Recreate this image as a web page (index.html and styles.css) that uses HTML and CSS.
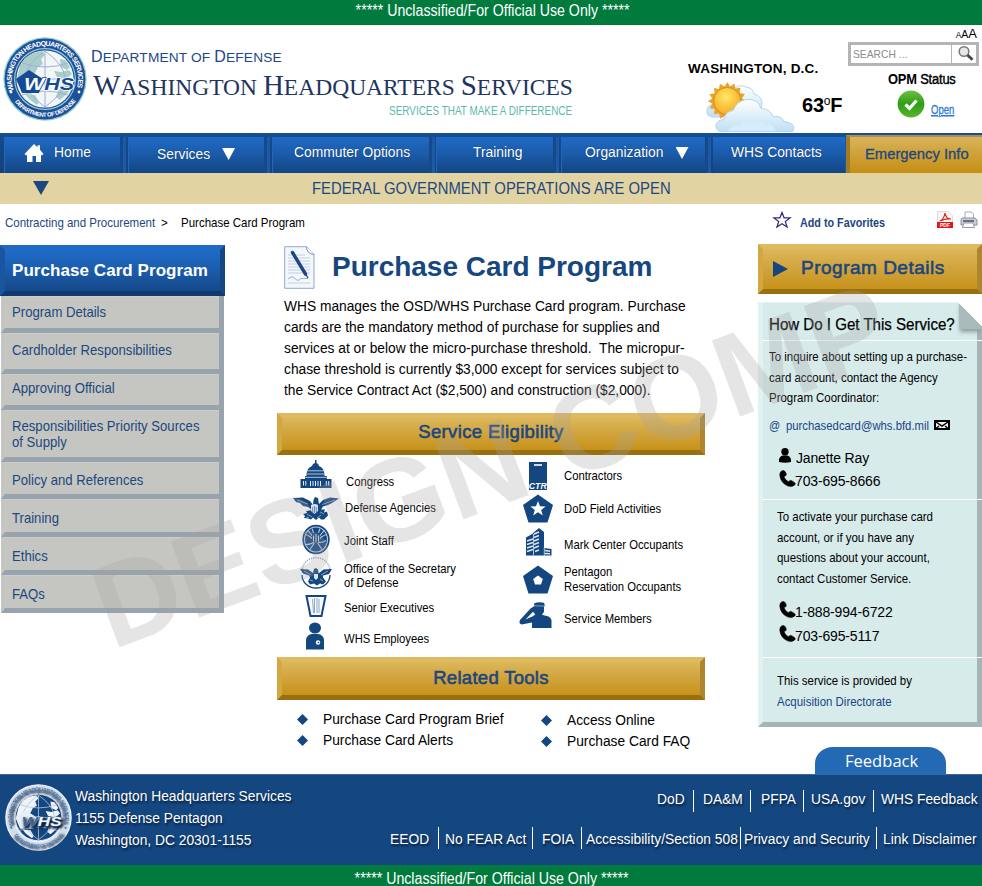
FILE: index.html
```html
<!DOCTYPE html>
<html lang="en">
<head>
<meta charset="utf-8">
<title>Purchase Card Program</title>
<link rel="stylesheet" href="styles.css">
</head>
<body>
<svg class="defs" width="0" height="0" aria-hidden="true">
  <defs>
    <path id="arcTop" d="M10.9 53.3A33.1 33.1 0 1 1 73.1 53.3"/>
    <path id="arcBottom" d="M9.5 61.4A37.9 37.9 0 0 0 74.5 61.4"/>
    <symbol id="seal" viewBox="0 0 84 84">
      <circle class="s-edge" cx="42" cy="42" r="41.7"/>
      <circle class="s-ring" cx="42" cy="42" r="40.4"/>
      <circle class="s-line" cx="42" cy="42" r="31"/>
      <circle class="s-ring" cx="42" cy="42" r="29.8"/>
      <circle class="s-globe" cx="42" cy="42" r="28.6"/>
      <path class="s-land" d="M17 29l5-8 8-5 9-2 3 4-4 4 2 5-5 3-3 6-8 3-6 4-4-2zM57 22l5 1 5 7-3 3-6-3zM60 50l8-3-3 9-8 7-4-3 2-6zM22 57l10 1 4 7-2 3-8-6zM51 34l7 1 8-2 3 4-6 5-9-2z"/>
      <path class="s-grid" d="M42 14v56M14 42h56M19 26q23 8 46 0M19 58q23-8 46 0M42 14q-40 28 0 56M42 14q40 28 0 56"/>
      <path class="s-penta" d="M26 33l14 9-4 14H19l-6-14z"/>
      <text class="s-whs" x="21" y="53" textLength="50" lengthAdjust="spacingAndGlyphs"><tspan class="s-w">W</tspan><tspan class="s-hs">HS</tspan></text>
      <text class="s-text"><textPath href="#arcTop" textLength="124">WASHINGTON HEADQUARTERS SERVICES</textPath></text>
      <text class="s-text s-small"><textPath href="#arcBottom" startOffset="4" textLength="71">DEPARTMENT OF DEFENSE</textPath></text>
      <circle class="s-dot" cx="8" cy="55" r="1.4"/><circle class="s-dot" cx="76" cy="55" r="1.4"/>
    </symbol>
    <symbol id="phone" viewBox="0 0 17 17">
      <path d="M2.2 1.2Q4.6-.6 6.3 1.8l1 2.4q.2 1.3-1 1.7l-1.4.6q.8 3.3 4.4 5.2l1.4-1q1-.6 2 0l3 2q1.200 1 0 2.200-2.600 2.400-6.600 1.200Q2 13.300.900 6q-.400-3.400 1.300-4.800z" stroke="#000" stroke-width=".6"/>
    </symbol>
    <linearGradient id="cloud" x1="0" y1="0" x2="0" y2="1"><stop offset="0" stop-color="#fff"/><stop offset="1" stop-color="#bfe0f4"/></linearGradient>
    <radialGradient id="sun" cx=".45" cy=".35" r=".7"><stop offset="0" stop-color="#ffe66a"/><stop offset="1" stop-color="#f5a91a"/></radialGradient>
    <linearGradient id="ok" x1="0" y1="0" x2="0" y2="1"><stop offset="0" stop-color="#6cc040"/><stop offset=".5" stop-color="#2f9d17"/><stop offset="1" stop-color="#58b52c"/></linearGradient>
  </defs>
</svg>

<div class="page">
  <div class="banner"><span>***** Unclassified/For Official Use Only *****</span></div>

  <header class="header">
    <svg class="logo"><use href="#seal"/></svg>
    <div class="brand">
      <div class="dept"><b>D</b>EPARTMENT OF <b>D</b>EFENSE</div>
      <div class="whs"><b>W</b>ASHINGTON <b>H</b>EADQUARTERS <b>S</b>ERVICES</div>
      <div class="tag">SERVICES THAT MAKE A DIFFERENCE</div>
    </div>
    <div class="weather">
      <div class="city">WASHINGTON, D.C.</div>
      <div class="now">
        <svg width="94" height="52" viewBox="0 0 94 52">
          <path d="M8 37q-6-1-5-7 1-6 8-6l20-16q6-4 11-1 7 1 8 7 8 2 8 10-1 10-9 13z" fill="url(#cloud)" stroke="#b5d5ea" stroke-width="1"/>
          <path d="M23.500 2l2.500 4.600 4.500-3 .8 5 5.200-.9-.8 5.200 5.200 1-2.900 4.400L42.300 21.200l-4.300 2.900 2.900 4.400-5.200 1 .8 5.200-5.200-.9-1 5.100-4.400-3.100-2.700 4.200-2.700-4.200-4.400 2.900-1-5.200-5.200.8.900-5.200-5.200-.9 3-4.400L4 21.200l4.200-2.600L5.500 14.200l5.200-1-.9-5.200 5.200.9.900-5.200 4.600 2.900z" fill="#eba32a"/>
          <circle cx="23.300" cy="21" r="13.600" fill="url(#sun)" stroke="#d98f18"/>
          <path d="M15 51.500q-4-3-3-7 2-5 8-5 1-8 9-9 4-10 14-11 11-1 14 9 9 0 12 8 9-1 11 5 9 1 10 6l-1 4z" fill="url(#cloud)" stroke="#b5d5ea"/>
          <path d="M24 51q3-8 12-5 4-7 13-3 7-5 13 2 7-2 10 6z" fill="#d5ecfa"/>
        </svg>
        <div class="temp">63<span>o</span>F</div>
      </div>
    </div>
    <div class="tools">
      <div class="sizes"><span class="sm">A</span><span class="md">A</span><span class="lg">A</span></div>
      <div class="search">
        <span class="ph">SEARCH ...</span>
        <span class="go"><svg width="18" height="18" viewBox="0 0 18 18"><circle cx="7" cy="6.500" r="4.800" fill="#e4e8ea" stroke="#777" stroke-width="1.500"/><path d="M10.500 10l5 4.800" stroke="#444" stroke-width="2.800"/></svg></span>
      </div>
      <div class="opm"><b>OPM</b> <span>Status</span></div>
      <div class="status">
        <svg width="28" height="28" viewBox="0 0 28 28"><circle cx="14" cy="14" r="13.400" fill="url(#ok)"/><path d="M8.500 14.500l4 4 7-8" fill="none" stroke="#fff" stroke-width="3.200"/></svg>
        <a class="open">Open</a>
      </div>
    </div>
  </header>

  <nav class="nav">
    <a class="n-home"><svg width="20" height="19" viewBox="0 0 20 19"><path d="M10 0l3.500 3.200V1.200H16v4.500L19.500 10 18 11.500l-1-.8V18h-5v-6H8.500v6H3v-7.300l-1 .8L.5 10z" fill="#fff"/></svg>Home</a>
    <a class="n-serv">Services<i class="tri"></i></a>
    <a class="n-comm">Commuter Options</a>
    <a class="n-train">Training</a>
    <a class="n-org">Organization<i class="tri"></i></a>
    <a class="n-cont">WHS Contacts</a>
    <a class="n-emer">Emergency Info</a>
  </nav>

  <div class="alert"><i class="tri navy"></i><span>FEDERAL GOVERNMENT OPERATIONS ARE OPEN</span></div>

  <div class="crumbs">
    <span class="c1">Contracting and Procurement</span><span class="gt">&gt;</span><span class="c2">Purchase Card Program</span>
    <svg class="star" width="20" height="18" viewBox="0 0 20 18"><path d="M10 1.500l2.100 5.300 6 .1-4.800 3.500 1.800 5.700-5.100-3.300-5.100 3.300 1.800-5.700L1.900 6.900l6-.1z" fill="#fff" stroke="#3b2480" stroke-width="1.200"/></svg>
    <span class="fav">Add to Favorites</span>
    <svg class="pdf" width="16" height="17" viewBox="0 0 16 17"><path d="M.5.500h11l4 4v12H.5z" fill="#f6f3f3" stroke="#ddd"/><path d="M3 10q4-2 5-8 1 6 6 6-6-.5-11 2z" fill="none" stroke="#d42a22" stroke-width="1.200"/><path d="M0 11h16v6H0z" fill="#dd1c16"/><text x="8" y="15.800" class="pdft">PDF</text></svg>
    <svg width="18" height="18" viewBox="0 0 18 18"><path d="M5 7V1h6l2.500 2v4" fill="#fff" stroke="#aab" stroke-width="1"/><path d="M2 7h13l2 2v5H1V9z" fill="#c9cbd6" stroke="#8b8fa2"/><path d="M3 9h11v2H3z" fill="#6a6f85"/><path d="M4 12h9l1.500 4.500h-12z" fill="#fff" stroke="#99a"/></svg>
  </div>

  <main class="main">
    <aside class="side">
      <h2>Purchase Card Program</h2>
      <ul>
        <li class="i1"><span>Program Details</span></li>
        <li class="i2"><span>Cardholder Responsibilities</span></li>
        <li class="i3"><span>Approving Official</span></li>
        <li class="i4"><span>Responsibilities Priority Sources<br>of Supply</span></li>
        <li class="i5"><span>Policy and References</span></li>
        <li class="i6"><span>Training</span></li>
        <li class="i7"><span>Ethics</span></li>
        <li class="i8"><span>FAQs</span></li>
      </ul>
    </aside>

    <section class="content">
      <div class="title">
        <svg width="31" height="43" viewBox="0 0 31 43"><path d="M.7.700H22.500L30 8.500v33.800H.7z" fill="#f3f7fb" stroke="#8ea9c9"/><path d="M22.500.700q0 7 7.500 7.800" fill="#fff" stroke="#6f93bd"/><path d="M4 9h17M4 12h22M4 15h22M4 18h22M4 21h22M4 24h22M4 27h22M4 37h22" stroke="#c3d0e0"/><path d="M4 33q4-4 7-.5t6 0h7" fill="none" stroke="#7f9cc4" stroke-width=".8"/><path d="M8.500 6.500L21.500 28" stroke="#1c477f" stroke-width="3.400" stroke-linecap="round"/><path d="M21 27l3 5" stroke="#1c477f" stroke-width="1.300"/></svg>
        <h1>Purchase Card Program</h1>
      </div>
      <p class="intro">WHS manages the OSD/WHS Purchase Card program. Purchase<br>cards are the mandatory method of purchase for supplies and<br>services at or below the micro-purchase threshold.&nbsp; The micropur-<br>chase threshold is currently $3,000 except for services subject to<br>the Service Contract Act ($2,500) and construction ($2,000).</p>
      <div class="gold g1"><span>Service Eligibility</span></div>
      <div class="elig">
        <ul class="left">
          <li class="r1"><svg width="32" height="28" viewBox="0 0 32 28"><path d="M15 0h1.500v3q2 .3 2.500 3 5 2 5.500 8v2h-18v-2Q7 8 12 6q.5-2.700 3-3z"/><path d="M5 16h22v3h4.500v9H.5v-9H5z"/><path d="M7 10.800h17.500M7 14h18M5 17.300h22" stroke="#c3d3e6" stroke-width=".9"/><path d="M3.500 21v4.500M5.800 21v4.500M10.500 21v5M13 21v5M15.500 21v5M18 21v5M20.500 21v5M26.300 21v4.500M28.700 21v4.500" stroke="#fff" stroke-width=".9"/></svg><span>Congress</span></li>
          <li class="r2"><svg width="46" height="24" viewBox="0 0 46 24"><path d="M0 1l10-.5 7 3.500 3 4 .5-5L22 0l3 1 1 6 4-4 7-2.500 9 1-4 2.500-3 2-4 2-5 1.500-2 3 4 0-1 3 3-1 1 4-4 4h-3l-2-2-3 2.500-3-2.500-2 2-3-1-4-.5 1-2-2-2 4-1-1-2 6-1-4-3-5-1-3-3-4-1z"/><path d="M18 8q4-2 7 0v6l-3.500 3-3.500-3z" fill="#d5dfeb"/><path d="M19.700 10v5M21.500 9v7M23.300 10v5" stroke="#456a98" stroke-width=".7"/><path d="M4 3l11 4M42 3l-13 4.500M14 17l5 3M28 18l-4 3M13 21l3-1M27 15l4 2" stroke="#9db4d0" stroke-width=".8"/></svg><span>Defense Agencies</span></li>
          <li class="r3"><svg width="28" height="30" viewBox="0 0 28 30"><ellipse cx="14" cy="15" rx="13.700" ry="14.700"/><g fill="none" stroke="#b8cbdf" stroke-width="1.100"><ellipse cx="14" cy="15" rx="11.500" ry="12.500"/><path d="M3 10q6 1 10 8M25 10q-6 1-10 8M6 6l8 10 8-10M4 20q6 0 10-4 4 4 10 0M8 25l6-9 6 9M10 4l4 11 4-11"/></g><path d="M10 9q4-2 8 0v7l-4 4-4-4z"/><path d="M11.500 11v6M14 9.500v8.500M16.500 11v6" stroke="#dce6f0" stroke-width=".9"/></svg><span>Joint Staff</span></li>
          <li class="r4"><svg width="32" height="29" viewBox="0 0 32 29"><path d="M2 12A14 13.300 0 0 1 30 12" fill="none" stroke="#93acca" stroke-width="1.500" stroke-dasharray="1.300 1"/><path d="M2 16A14 13 0 0 0 30 16" fill="none" stroke="#14467f" stroke-width="1.300"/><path d="M0 10l8 .5 5 3.500 1-4 2-1 2 1.500.5 4 5-4 8.500-.5-3 5-6 1.500 0 2 3 4-3 3-3-1-3 2-3-2-4 1-2-3 2-4-1-2-6-2z"/><path d="M14 15h4v4l-2 2-2-2z" fill="#dce6f0"/><path d="M4 12l7 4M28 12l-7 4M10 21l3 1M20 20l3 2" stroke="#a9bed6" stroke-width=".8"/></svg><span>Office of the Secretary<br>of Defense</span></li>
          <li class="r5"><svg width="22" height="22" viewBox="0 0 22 22"><path d="M1.500 1h19L16.500 21h-11z" fill="#f7fafd" stroke="#14467f" stroke-width="2"/><path d="M7.500 4l1 14M9.500 3v15M12 3v15M14 4v14" stroke="#8fa9c8" stroke-width="1"/></svg><span>Senior Executives</span></li>
          <li class="r6"><svg width="18" height="27" viewBox="0 0 18 27"><ellipse cx="9" cy="5.500" rx="6" ry="5.500"/><path d="M0 27V17q1-5 6-5.500h6q5 .500 6 5.500v10z"/><circle cx="12" cy="20" r="2.200" fill="#fff"/><circle cx="12.500" cy="20" r=".8"/></svg><span>WHS Employees</span></li>
        </ul>
        <ul class="right">
          <li class="q1"><svg width="19" height="28" viewBox="0 0 19 28"><path d="M.5 0h18v28H.5z"/><path d="M5.500 3h8" stroke="#fff" stroke-width="1.600"/><text x="9.300" y="26.500" class="ctr" textLength="18" lengthAdjust="spacingAndGlyphs">CTR</text></svg><span>Contractors</span></li>
          <li class="q2"><svg width="30" height="29" viewBox="0 0 30 29"><path d="M15 .5L30 11l-5.500 17.500h-19L0 11z"/><path d="M15 7l2 5.300 5.600.2-4.400 3.500 1.600 5.500-4.800-3.200-4.800 3.200 1.600-5.500-4.400-3.500 5.600-.2z" fill="#fff"/></svg><span>DoD Field Activities</span></li>
          <li class="q3"><svg width="28" height="28" viewBox="0 0 28 28"><path d="M0 27.500h2v-18l7-4V5l6-5 5 4v16l7.500 1v6.500z"/><path d="M3 13l6-2M3 16.500l6-2M3 20l6-2M3 23.500l6-2M10 6l5-2M10 9.500l5-2M10 13l5-2M10 16.500l5-2M10 20l5-2M11 23.500l4-1.500M21 22.500l5 .8M21 25.500l5 .3" stroke="#dfe8f2" stroke-width="1.400"/><path d="M9.500 6v21M20.300 19v8.500" stroke="#fff" stroke-width=".7"/></svg><span>Mark Center Occupants</span></li>
          <li class="q4"><svg width="30" height="29" viewBox="0 0 30 29"><path d="M15 .5L30 11l-5.500 17.500h-19L0 11z"/><path d="M15 10.500l4.800 3.500-1.800 5.500h-6L10.200 14z" fill="#fff"/></svg><span>Pentagon<br>Reservation Occupants</span></li>
          <li class="q5"><svg width="33" height="27" viewBox="0 0 33 27"><path d="M14.500 1.500Q19-.8 24.500.800l.8 2.700-.8 1.200v5l-2 3 6.500 1.800q2.500 1 3 3.500V26H12.500v-5.500L2 22.500Q-1 21.500.500 18L11 6.500l4-2.500z"/><path d="M6 17.500l7.500-7.700 2.300 2.700-3 2z" fill="#fff"/><path d="M15 3.800l10 .3" stroke="#b8c9dd" stroke-width=".7"/></svg><span>Service Members</span></li>
        </ul>
      </div>
      <div class="gold g2"><span>Related Tools</span></div>
      <div class="related">
        <ul><li>Purchase Card Program Brief</li><li>Purchase Card Alerts</li></ul>
        <ul class="rr"><li>Access Online</li><li>Purchase Card FAQ</li></ul>
      </div>
    </section>

    <aside class="info">
      <div class="gold g3"><svg width="15" height="16" viewBox="0 0 15 16"><path d="M0 0l15 8-15 8z"/></svg><span>Program Details</span></div>
      <div class="panel">
        <div class="fold"></div>
        <h3><span>How Do I Get This Service?</span></h3>
        <div class="blk b1">
          <p>To inquire about setting up a purchase-<br>card account, contact the Agency<br>Program Coordinator:</p>
          <div class="mail"><span class="at">@</span><span class="addr">purchasedcard@whs.bfd.mil</span><svg width="16" height="10" viewBox="0 0 16 10"><path d="M1 1h14v8H1z" fill="#e8f3f3" stroke="#000" stroke-width="2"/><path d="M2 2l6 4 6-4M2 8.500L5 6M14 8.500L11 6" fill="none" stroke="#000" stroke-width="1.500"/></svg></div>
          <div class="who"><svg width="12" height="15" viewBox="0 0 12 15"><circle cx="6" cy="3.800" r="3.700"/><path d="M0 12q0-3 3.500-4.500h5Q12 9 12 12v2q-6 1.500-12 0z"/></svg><span>Janette Ray</span></div>
          <div class="tel"><svg width="17" height="17"><use href="#phone"/></svg><span>703-695-8666</span></div>
        </div>
        <div class="blk b2">
          <p>To activate your purchase card<br>account, or if you have any<br>questions about your account,<br>contact Customer Service.</p>
          <div class="tel t2"><svg width="17" height="17"><use href="#phone"/></svg><span>1-888-994-6722</span></div>
          <div class="tel"><svg width="17" height="17"><use href="#phone"/></svg><span>703-695-5117</span></div>
        </div>
        <div class="blk b3"><p>This service is provided by<br><a>Acquisition Directorate</a></p></div>
      </div>
      <div class="feedback"><span>Feedback</span></div>
    </aside>
  </main>

  <footer class="footer">
    <svg class="flogo"><use href="#seal"/></svg>
    <address>Washington Headquarters Services<br>1155 Defense Pentagon<br>Washington, DC 20301-1155</address>
    <div class="links">
      <div class="row">
        <a class="w1">DoD</a><a class="w2">DA&amp;M</a><a class="w3">PFPA</a><a class="w4">USA.gov</a><a class="w5">WHS Feedback</a>
      </div>
      <div class="row second">
        <a class="v1">EEOD</a><a class="v2">No FEAR Act</a><a class="v3">FOIA</a><a class="v4">Accessibility/Section 508</a><a class="v5">Privacy and Security</a><a class="v6">Link Disclaimer</a>
      </div>
    </div>
  </footer>
  <div class="banner bottom"><span>***** Unclassified/For Official Use Only *****</span></div>

  <svg class="mark" width="982" height="886" viewBox="0 0 982 886"><text transform="translate(112 650) rotate(-20.400)">DESIGN COMP</text></svg>
</div>
</body>
</html>
```
FILE: styles.css
```css
* { box-sizing: border-box; }
body { margin: 0; background: #fff; color: #000; font-family: "Liberation Sans", Arial, sans-serif; font-size: 14px; }
ul { list-style: none; margin: 0; padding: 0; }
h1, h2, h3, p { margin: 0; font-weight: normal; }
.defs { position: absolute; }
.page { position: relative; width: 982px; height: 886px; overflow: hidden; display: flex; flex-direction: column; }
.page > * { flex: none; }

/* classification banners */
.banner { height: 25px; background: #007b3d; color: #fff; font-size: 16px; line-height: 21px; text-align: center; padding-left: 4px; }
.banner span { display: inline-block; transform: scaleX(.886); }
.bottom { height: 21px; line-height: 27px; overflow: hidden; padding-left: 1px; }

/* header */
.header { height: 108px; display: flex; align-items: flex-start; }
.logo { width: 84px; height: 84px; margin: 12px 0 0 3px; }
.brand { width: 601px; padding-top: 21px; white-space: nowrap; }
.dept { margin-left: 4px; font-size: 13.700px; line-height: 21px; letter-spacing: .16px; color: #1c4789; }
.dept b { font-weight: normal; font-size: 16px; }
.whs { margin: 4px 0 0 6px; font: 23.500px/30px "Liberation Serif", serif; color: #1d3560; height: 30px; }
.whs b { font-weight: normal; font-size: 29px; line-height: 0; }
.tag { margin: 2px 0 0 302px; font-size: 12px; line-height: 14px; color: #5cb9ab; transform: scaleX(.828); transform-origin: 0 50%; }
.weather { width: 160px; padding-top: 36px; }
.city { font-weight: bold; font-size: 13.500px; line-height: 16px; letter-spacing: .2px; white-space: nowrap; }
.now { display: flex; margin-left: 16px; height: 56px; padding-top: 3px; overflow: hidden; }
.temp { font-weight: bold; font-size: 20px; line-height: 24px; margin: 13px 0 0 4px; white-space: nowrap; letter-spacing: -.2px; }
.temp span { font-weight: normal; font-size: 12px; vertical-align: 7px; line-height: 0; }
.tools { width: 134px; display: flex; flex-direction: column; }
.sizes { align-self: flex-end; margin-right: 5px; height: 17px; line-height: 16px; }
.sm { font-size: 8.500px; } .md { font-size: 10.500px; } .lg { font-size: 13px; }
.search { width: 131px; height: 24px; border: 3px solid #b4b4b4; display: flex; background: #fff; }
.ph { flex: 1; padding-left: 2px; font-size: 10.300px; line-height: 19px; color: #8b8b8b; }
.go { width: 25px; border-left: 1px solid #b4b4b4; padding-left: 5px; overflow: hidden; }
.opm { margin: 5px 0 0 40px; font-size: 14px; line-height: 17px; white-space: nowrap; transform: scaleX(.92); transform-origin: 0 50%; letter-spacing: -.2px; }
.opm span { -webkit-text-stroke: .4px #000; }
.status { display: flex; margin: 2px 0 0 49px; }
.open { margin: 12px 0 0 6px; height: 15px; font-size: 13px; line-height: 15px; color: #2f78d8; border-bottom: 1px solid #8db9ee; transform: scaleX(.73); transform-origin: 0 50%; -webkit-text-stroke: .3px #2f78d8; text-decoration: underline; }

/* seal */
.s-edge, .s-line { fill: var(--edge); }
.s-ring { fill: var(--ring); }
.s-globe { fill: var(--globe); }
.s-land { fill: var(--land); }
.s-grid { fill: none; stroke: var(--grid); stroke-width: 1; }
.s-penta { fill: var(--penta); }
.s-whs { font: italic bold 17px "Liberation Sans", sans-serif; stroke-width: 1.500px; paint-order: stroke; }
.s-w { fill: var(--w); stroke: var(--penta); }
.s-hs { fill: var(--hs); stroke: var(--hsline); }
.s-text { font: bold 7px "Liberation Sans", sans-serif; fill: var(--lettering); }
.s-small { font-size: 6px; }
.s-dot { fill: var(--lettering); }
.logo { --edge: #8fd0d0; --ring: #1d509b; --globe: #f1f6f7; --land: #a9cec9; --grid: #a3addb; --penta: #164a93; --w: #fff; --hs: #164a93; --hsline: #fff; --lettering: #fff; }
.flogo { --edge: #f4f7fb; --ring: #d3dde9; --globe: #14467f; --land: #eef3f8; --grid: #b3c5dc; --penta: #e9eff6; --w: #c9d6e6; --hs: #f4f7fb; --hsline: #5c7fab; --lettering: #4d74a5; }
.flogo { --penta: #e9eff6; --w: #3c659a; }

/* navigation */
.nav { height: 40px; display: flex; padding: 4px 0 0 4px; background: linear-gradient(#164f93, #124a8e 20%, #16427a); color: #fff; font-size: 13.850px; text-shadow: 0 0 1px #0d2f5c; }
.nav a { height: 36px; line-height: 31px; display: flex; white-space: nowrap; background: linear-gradient(#1f6ac6, #1b5cab 45%, #144582); border-right: 3px solid #174887; box-shadow: 3px 0 0 #1c5aa8, inset 1px 1px 1px #2468be; margin-right: 5px; }
.nav .n-home { width: 119px; padding-left: 20px; }
.n-home svg { margin: 7px 10px 0 0; }
.nav .n-serv { width: 139px; padding-left: 29px; line-height: 34px; }
.nav .n-comm { width: 160px; padding-left: 22px; margin-right: 4px; }
.nav .n-train { width: 120px; padding-left: 37px; }
.nav .n-org { width: 147px; padding-left: 24px; }
.nav .n-cont { width: 133px; padding-left: 18px; margin-right: 0; box-shadow: none; border-right: 1px solid #1458ad; }
.nav .n-emer { flex: 1; height: 38px; margin: -2px 0 0; padding-left: 15px; line-height: 34px; font-size: 14.800px; color: #1c477f; -webkit-text-stroke: .3px #1c477f; text-shadow: none; background: linear-gradient(#d9b45c, #cfa23a 45%, #c58f14); border: 0; border-left: 4px solid #a17c25; border-top: 2px solid #a98f52; box-shadow: none; }
.tri { width: 13px; height: 12px; margin: 10px 0 0 12px; background: #fff; clip-path: polygon(0 0, 100% 0, 50% 100%); }
.n-serv .tri { margin-top: 11px; }

.alert { height: 31px; background: #e2d3a2; display: flex; color: #1c477f; font-size: 16px; line-height: 31px; white-space: nowrap; }
.tri.navy { width: 16px; height: 14px; margin: 8px 0 0 33px; background: #1c477f; }
.alert span { margin-left: 263px; transform: scaleX(.928); transform-origin: 0 50%; }

.crumbs { height: 40px; display: flex; padding-top: 7px; font-size: 13px; line-height: 23px; white-space: nowrap; }
.crumbs span { transform: scaleX(.884); transform-origin: 0 50%; }
.c1 { margin-left: 5px; width: 156px; color: #1c477f; }
.gt { width: 19.500px; }
.c2 { width: 591px; }
.star { margin: 0 8px 0 0; }
.crumbs .fav { width: 137px; font-weight: bold; font-size: 12px; color: #1c477f; line-height: 24px; transform: scaleX(.898); }
.pdf { margin-right: 7px; }
.pdft { font: bold 5px "Liberation Sans", sans-serif; fill: #fff; text-anchor: middle; }

.main { height: 530px; display: flex; align-items: flex-start; }

/* sidebar */
.side { width: 277px; padding-top: 1px; }
.side h2 { width: 225px; height: 51px; padding-left: 7px; font-weight: bold; font-size: 17px; line-height: 41px; letter-spacing: .06px; color: #fff; white-space: nowrap; background: linear-gradient(#1f6bc7, #1b5fb1 40%, #154989); border: 5px solid #0f3a70; border-top-color: #1f6ac4; border-left-color: #1a569f; border-right-color: #144684; }
.side ul { margin-left: 1px; width: 223px; }
.side li { background: #c5c6c1; border: 5px solid #98a4ad; border-top: 0; border-left: 4px solid #c5c6c1; padding-left: 7px; font-size: 15px; line-height: 16px; color: #1c477f; white-space: nowrap; box-shadow: inset 0 1px #cdcec9; }
.side span { display: inline-block; transform: scaleX(.875); transform-origin: 0 50%; }
.side .i1 { height: 37px; padding-top: 8px; }
.side .i2 { height: 41px; padding-top: 9px; }
.side .i3 { height: 36px; padding-top: 6px; }
.side .i4 { height: 52px; padding-top: 8px; }
.side .i5 { height: 37px; padding-top: 10px; }
.side .i6, .side .i7, .side .i8 { height: 38px; padding-top: 11px; }

/* centre column */
.content { width: 428px; }
.title { display: flex; padding: 2px 0 0 7px; height: 52px; }
.title h1 { margin: 1px 0 0 17px; font-weight: bold; font-size: 28px; line-height: 40px; letter-spacing: -.01px; color: #17477f; white-space: nowrap; }
.intro { height: 117px; padding-left: 7px; font-size: 13.780px; line-height: 21px; white-space: nowrap; }
.gold { display: flex; justify-content: center; color: #1c477f; font-size: 18.500px; -webkit-text-stroke: .6px #1c477f; background: linear-gradient(#dcb75a, #d2a53f 45%, #c7921a); border: 5px solid #99700f; border-top-color: #dfba60; border-left-color: #d3a742; border-right-color: #ad862f; white-space: nowrap; }
.g1 { height: 42px; line-height: 28px; }
.g1 span { letter-spacing: .35px; }
.g2 { height: 43px; line-height: 31px; }
.g2 span { letter-spacing: .3px; }
.elig { display: flex; height: 202px; font-size: 13px; line-height: 14px; }
.elig li { display: flex; align-items: center; white-space: nowrap; }
.elig svg { flex: none; fill: #14467f; overflow: visible; }
.elig span { transform: scaleX(.867); transform-origin: 0 50%; }
.left { width: 220px; padding-top: 11px; }
.left li { padding-left: 67px; }
.r1 { height: 32px; } .r1 svg { margin: 0 14px 0 -44px; transform: translateY(-8px); }
.r2 { height: 19px; } .r2 svg { margin: 0 6px 0 -51px; transform: translateY(1px); }
.r3 { height: 48px; } .r3 svg { margin: 0 14px 0 -42px; transform: translateY(-1.500px); }
.r4 { height: 21px; } .r4 svg { margin: 0 12px 0 -44px; transform: translateY(-2px); }
.r5 { height: 44px; } .r5 svg { margin: 0 17px 0 -39px; transform: translateY(-2px); }
.r6 { height: 18px; } .r6 svg { margin: 0 20px 0 -38px; transform: translateY(-3.500px); }
.right { padding-top: 4px; }
.right li { padding-left: 67px; }
.right svg { width: 34px; margin: 0 9px 0 -43px; }
.q1 { height: 33px; }
.q2 { height: 33px; }
.q3 { height: 39px; } .q3 svg { transform: translateY(-3px); }
.q4 { height: 30px; line-height: 15px; }
.q5 { height: 49px; } .q5 svg { transform: translate(-2px, -3px); }
.ctr { font: italic bold 9.500px "Liberation Sans", sans-serif; fill: #fff; text-anchor: middle; }
.related { display: flex; padding: 9px 0 0 20px; font-size: 13.780px; line-height: 21px; white-space: nowrap; }
.related ul { flex: none; width: 244px; }
.related .rr { width: 164px; padding-top: 1px; }
.related li { display: flex; align-items: center; }
.related li::before { content: ""; width: 11px; height: 11px; margin-right: 15px; background: #14467f; clip-path: polygon(50% 0, 100% 50%, 50% 100%, 0 50%); }

/* right column */
.info { width: 224px; margin-left: 53px; }
.g3 { height: 50px; margin-bottom: 8px; line-height: 37px; justify-content: flex-start; padding-left: 10px; font-size: 19px; letter-spacing: .5px; }
.g3 svg { margin: 12px 13px 0 0; fill: #14467f; }
.panel { position: relative; height: 425px; background: #d7ebeb; border: 5px solid #a5b5b4; border-top: 1px solid #e4f2f2; border-left-color: #e2f1f1; }
.fold { position: absolute; right: -5px; top: -2px; width: 23px; height: 28px; background: linear-gradient(45deg, #a9bcbb 50%, #fff 51%); box-shadow: 0 4px 4px -1px #8f9f9f; }
.panel h3 { height: 38px; padding-left: 6px; font-size: 16px; line-height: 43px; white-space: nowrap; border-bottom: 1px solid #fff; margin-right: -5px; -webkit-text-stroke: .25px #000; }
.panel h3 span { display: inline-block; transform: scaleX(.942); transform-origin: 0 50%; }
.blk { margin-right: -5px; white-space: nowrap; font-size: 13px; line-height: 20.600px; }
.blk p { transform: scaleX(.881); transform-origin: 0 50%; }
.b1 { height: 159px; padding: 6px 0 0 6px; border-bottom: 1px solid #fff; }
.mail { display: flex; color: #1a4587; line-height: 20px; margin-top: 7px; }
.at { width: 17px; transform: scaleX(.85); transform-origin: 0 50%; }
.addr { width: 148px; transform: scaleX(.871); transform-origin: 0 50%; }
.mail svg { margin-top: 4px; }
.who { display: flex; margin: 10px 0 0 10px; font-size: 14px; letter-spacing: -.15px; line-height: 24px; }
.who svg { margin: 2px 5px 0 0; }
.tel { display: flex; margin-left: 10px; height: 24px; font-size: 14px; line-height: 23px; letter-spacing: -.15px; }
.tel svg { margin: 0 -1px 0 0; }
.tel span { line-height: 23px; }
.b2 { height: 158px; padding: 7px 0 0 14px; border-bottom: 1px solid #fff; }
.b2 .tel { margin-left: 2px; }
.b2 .t2 { margin-top: 12px; }
.b3 { padding: 13px 0 0 14px; }
.b3 a { color: #1a4587; }
.feedback { width: 131px; height: 27px; margin: 20px 0 0 57px; background: #2369b3; border-radius: 18px 18px 0 0 / 16px 16px 0 0; color: #fff; font: 17px/27px "Open Sans", sans-serif; text-align: center; padding-left: 3px; }
.feedback span { display: inline-block; transform: scaleX(.975); }

/* footer */
.footer { height: 91px; background: #14467f; border-top: 1px solid #3c6698; display: flex; color: #fff; font-size: 13.800px; text-shadow: 1px 2px 2px #071e3d; white-space: nowrap; }
.flogo { width: 67px; height: 67px; margin: 9px 3px 0 5px; }
address { font-style: normal; line-height: 22px; padding-top: 11px; width: 300px; }
.links { flex: 1; padding-top: 15px; }
.row { display: flex; justify-content: flex-end; padding-right: 4px; line-height: 19px; }
.row a { height: 22px; }
.row a + a { border-left: 1px solid #fff; }
.second { margin-top: 15px; line-height: 25px; }
.w1 { width: 36px; } .w2 { width: 57px; padding-left: 9px; } .w3 { width: 53px; padding-left: 10px; } .w4 { width: 70px; padding-left: 7px; } .w5 { width: 105px; padding-left: 7px; }
.v1 { width: 48px; } .v2 { width: 94px; padding-left: 6px; } .v3 { width: 49px; padding-left: 9px; } .v4 { width: 159px; padding-left: 4px; } .v5 { width: 136px; padding-left: 3px; } .v6 { width: 102px; padding-left: 6px; }

.mark { position: absolute; left: 0; top: 0; pointer-events: none; }
.mark text { font: bold 118px "Liberation Sans", sans-serif; fill: rgba(165, 160, 160, .28); }
```
